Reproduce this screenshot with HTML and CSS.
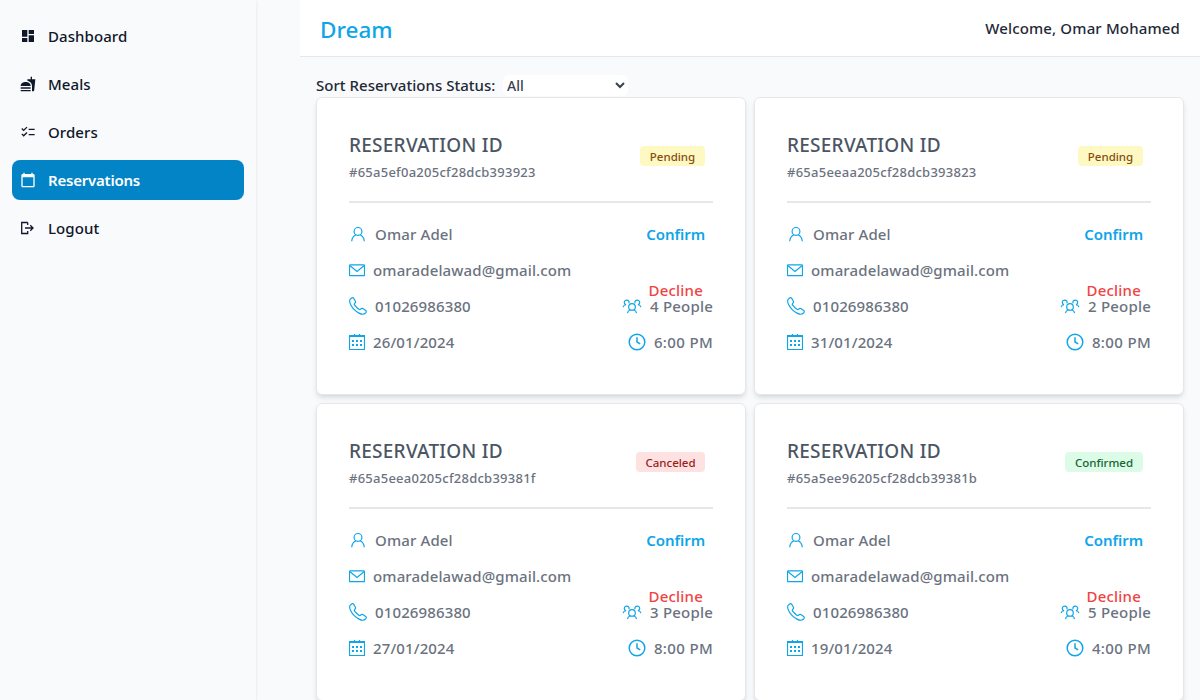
FILE: index.html
```
<!DOCTYPE html>
<html lang="en">
<head>
<meta charset="utf-8">
<title>Dream</title>
<link rel="stylesheet" href="styles.css">
</head>
<body>
<svg class="sprite" aria-hidden="true">
  <symbol id="user" viewBox="0 0 18 18"><circle cx="9" cy="6.400" r="3.900"/><path d="M2.700 16.200C3 13 4.500 10.900 7 9.800M15.300 16.200C15 13 13.500 10.900 11 9.800"/></symbol>
  <symbol id="mail" viewBox="0 0 16 16"><rect x=".5" y="2.900" width="15" height="10.800" rx=".6"/><path d="M1 3.700l7 5.700 7-5.700"/></symbol>
  <symbol id="phone" viewBox="0 0 18 18"><path d="M1 2.500C2.300.8 3.700.2 4.600 1.100L6.400 4.200C6.900 5.100 6.500 5.700 5.700 6.400C5 7 5.200 7.500 5.700 8.200C7 10 8.300 11.200 9.900 12.300C10.600 12.800 11.100 12.700 11.600 12.100C12.300 11.300 13 11.100 13.800 11.600L16.700 13.500C17.700 14.200 17.400 15.200 16.300 16.300C14.800 17.700 12.800 17.600 10 16.100C6.900 14.400 3.400 11.200 1.700 7.800C.6 5.600.3 3.900 1 2.500Z"/></symbol>
  <symbol id="calendar" viewBox="0 0 16 16"><path d="M.5 1.500h15v14H.5zM.5 2.500h15M5.500 0v3M10.500 0v3"/><path class="dots" d="M3 6h2v2H3zM7 6h2v2H7zM11 6h2v2h-2zM3 10h2v2H3zM7 10h2v2H7zM11 10h2v2h-2z"/></symbol>
  <symbol id="people" viewBox="0 0 20 20"><circle cx="10" cy="10.900" r="3.300"/><path d="M5.400 17c.4-1.800 1.400-2.800 2.800-3.300M14.600 17c-.4-1.800-1.400-2.800-2.800-3.300M7 7.300C7.500 5.500 6.300 4 4.600 4.100C2.700 4.200 1.700 6 2.600 7.500C2.900 8.200 3.400 8.600 4 8.900M3.700 8.500C2.400 8.900 1.500 9.800 1.100 11.200M13 7.300C12.500 5.500 13.700 4 15.400 4.100C17.300 4.200 18.300 6 17.400 7.500C17.100 8.200 16.600 8.600 16 8.900M16.300 8.500c1.300.4 2.200 1.300 2.600 2.700"/></symbol>
  <symbol id="clock" viewBox="0 0 18 18"><circle cx="9" cy="9" r="7.800"/><path d="M9 4.200V9l3.200 1.800"/></symbol>
</svg>
<div class="app">
  <nav class="sidebar">
    <a class="nav-item"><svg class="nav-icon" viewBox="0 0 16 16"><path d="M2 2h5.300v6.700H2zM8.700 2H14v4H8.700zM8.700 7.300H14V14H8.700zM2 10h5.300v4H2z"/></svg><span>Dashboard</span></a>
    <a class="nav-item"><svg class="nav-icon" viewBox="0 0 24 24"><path d="M1 22c0 .5.5 1 1 1h13c.6 0 1-.5 1-1v-1H1zM8.500 9C4.800 9 1 11 1 15h15c0-4-3.800-6-7.500-6zM1 17h15v2H1zM18 5V1h-2v4h-5l.2 2.300C14.900 8.300 18 11 18 15v8h1.700c.8 0 1.500-.6 1.600-1.500L23 5z"/></svg><span>Meals</span></a>
    <a class="nav-item"><svg class="nav-icon" viewBox="0 0 24 24"><path d="M22 7h-9v2h9zM22 15h-9v2h9zM5.500 11 2 7.500l1.400-1.400 2.100 2.100 4.300-4.200 1.400 1.400zM5.500 19 2 15.500l1.400-1.400 2.100 2.100 4.300-4.200 1.400 1.400z"/></svg><span>Orders</span></a>
    <a class="nav-item active"><svg class="nav-icon" viewBox="0 0 24 24"><path d="M20 3h-1V1h-2v2H7V1H5v2H4c-1.100 0-2 .9-2 2v16c0 1.100.9 2 2 2h16c1.100 0 2-.9 2-2V5c0-1.100-.9-2-2-2zm0 18H4V8h16z"/></svg><span>Reservations</span></a>
    <a class="nav-item"><svg class="nav-icon outline" viewBox="0 0 16 16"><path d="M7.700 2.500H1.700v11h6V11M7.700 5V2.500M5 8h8M10.300 5.200 13 8l-2.700 2.800"/></svg><span>Logout</span></a>
  </nav>
  <div class="page">
    <header class="topbar"><h1 class="brand">Dream</h1><span class="welcome">Welcome, Omar Mohamed</span></header>
    <main class="content">
      <div class="sort"><label for="status">Sort Reservations Status:</label><select id="status" class="status"><option>All</option><option>Pending</option><option>Confirmed</option><option>Canceled</option></select></div>
      <div class="cards">
        <article class="card">
          <div class="card-head"><div><h2 class="title">RESERVATION ID</h2><p class="rid">#65a5ef0a205cf28dcb393923</p></div><span class="badge pending">Pending</span></div>
          <div class="card-body">
            <div class="contact"><p class="row"><svg class="i18"><use href="#user"/></svg><span>Omar Adel</span></p><p class="row"><svg class="i16"><use href="#mail"/></svg><span class="email">omaradelawad@gmail.com</span></p><p class="row"><svg class="i18"><use href="#phone"/></svg><span class="tel">01026986380</span></p><p class="row"><svg class="i16"><use href="#calendar"/></svg><span class="date">26/01/2024</span></p></div>
            <div class="details"><button class="confirm">Confirm</button><button class="decline">Decline</button><p class="row guests"><svg class="i20"><use href="#people"/></svg><span>4 People</span></p><p class="row time"><svg class="i18 bold"><use href="#clock"/></svg><span>6:00 PM</span></p></div>
          </div>
        </article>
        <article class="card">
          <div class="card-head"><div><h2 class="title">RESERVATION ID</h2><p class="rid">#65a5eeaa205cf28dcb393823</p></div><span class="badge pending">Pending</span></div>
          <div class="card-body">
            <div class="contact"><p class="row"><svg class="i18"><use href="#user"/></svg><span>Omar Adel</span></p><p class="row"><svg class="i16"><use href="#mail"/></svg><span class="email">omaradelawad@gmail.com</span></p><p class="row"><svg class="i18"><use href="#phone"/></svg><span class="tel">01026986380</span></p><p class="row"><svg class="i16"><use href="#calendar"/></svg><span class="date">31/01/2024</span></p></div>
            <div class="details"><button class="confirm">Confirm</button><button class="decline">Decline</button><p class="row guests"><svg class="i20"><use href="#people"/></svg><span>2 People</span></p><p class="row time"><svg class="i18 bold"><use href="#clock"/></svg><span>8:00 PM</span></p></div>
          </div>
        </article>
        <article class="card">
          <div class="card-head"><div><h2 class="title">RESERVATION ID</h2><p class="rid">#65a5eea0205cf28dcb39381f</p></div><span class="badge canceled">Canceled</span></div>
          <div class="card-body">
            <div class="contact"><p class="row"><svg class="i18"><use href="#user"/></svg><span>Omar Adel</span></p><p class="row"><svg class="i16"><use href="#mail"/></svg><span class="email">omaradelawad@gmail.com</span></p><p class="row"><svg class="i18"><use href="#phone"/></svg><span class="tel">01026986380</span></p><p class="row"><svg class="i16"><use href="#calendar"/></svg><span class="date">27/01/2024</span></p></div>
            <div class="details"><button class="confirm">Confirm</button><button class="decline">Decline</button><p class="row guests"><svg class="i20"><use href="#people"/></svg><span>3 People</span></p><p class="row time"><svg class="i18 bold"><use href="#clock"/></svg><span>8:00 PM</span></p></div>
          </div>
        </article>
        <article class="card">
          <div class="card-head"><div><h2 class="title">RESERVATION ID</h2><p class="rid">#65a5ee96205cf28dcb39381b</p></div><span class="badge confirmed">Confirmed</span></div>
          <div class="card-body">
            <div class="contact"><p class="row"><svg class="i18"><use href="#user"/></svg><span>Omar Adel</span></p><p class="row"><svg class="i16"><use href="#mail"/></svg><span class="email">omaradelawad@gmail.com</span></p><p class="row"><svg class="i18"><use href="#phone"/></svg><span class="tel">01026986380</span></p><p class="row"><svg class="i16"><use href="#calendar"/></svg><span class="date">19/01/2024</span></p></div>
            <div class="details"><button class="confirm">Confirm</button><button class="decline">Decline</button><p class="row guests"><svg class="i20"><use href="#people"/></svg><span>5 People</span></p><p class="row time"><svg class="i18 bold"><use href="#clock"/></svg><span>4:00 PM</span></p></div>
          </div>
        </article>
      </div>
    </main>
  </div>
</div>
</body>
</html>
```
FILE: styles.css
```
*{box-sizing:border-box;margin:0;padding:0}
body{font-family:"Segoe UI","Noto Sans",sans-serif;font-size:15px;line-height:24px;font-weight:500;color:#1f2937;background:#f9fafc;height:700px;overflow:hidden;letter-spacing:.15px}
.sprite{position:absolute;width:0;height:0}
.app{display:flex;height:700px}
.sidebar{width:256px;flex:none;margin-right:44px;padding:16px 12px;display:flex;flex-direction:column;gap:8px;box-shadow:0 1px 3px rgba(0,0,0,.1)}
.nav-item{display:flex;align-items:center;gap:12px;height:40px;padding:0 8px;border-radius:8px;color:#0f172a;letter-spacing:.08px}
.nav-icon{width:16px;height:16px;fill:currentColor}
.nav-icon.outline{fill:none;stroke:currentColor;stroke-width:1.3}
.active{background:#0284c7;color:#fff;font-weight:600;letter-spacing:-.22px}
.page{flex:1;min-width:0}
.topbar{height:57px;background:#fff;border-bottom:1px solid #e5e7eb;display:flex;justify-content:space-between;align-items:center;padding:0 20px}
.brand{font-size:22.5px;font-weight:500;line-height:32px;color:#0ea5e9;padding-top:3px;letter-spacing:0}
.content{padding:16px}
.sort{display:flex;align-items:center;gap:8px;height:24px}
.sort label{letter-spacing:.02px;width:179px;white-space:nowrap}
.status{font:inherit;font-size:14px;line-height:20px;height:21px;width:125px;border:0;border-radius:6px;background:#fff;color:#374151}
.cards{display:grid;grid-template-columns:1fr 1fr;gap:8px}
.card{height:298px;background:#fff;border:1px solid #e5e7eb;border-radius:6px;padding:32px;box-shadow:0 4px 6px -1px rgba(0,0,0,.1),0 2px 4px -2px rgba(0,0,0,.1)}
.card-head{display:flex;justify-content:space-between;align-items:flex-start;height:73px;padding:1px 8px 0 0;border-bottom:2px solid #e5e7eb}
.title{font-size:19px;line-height:28px;font-weight:500;color:#4b5563;letter-spacing:.25px}
.rid{font-size:13px;line-height:20px;color:#6b7280;margin-top:3px;letter-spacing:.25px}
.badge{height:20px;line-height:21px;border-radius:4px;font-size:11.5px;letter-spacing:-.02px;margin-top:15px;text-align:center}
.pending{background:#fef9c3;color:#854d0e;width:65px}
.canceled{background:#fee2e2;color:#991b1b;width:69px}
.confirmed{background:#dcfce7;color:#166534;width:78px}
.card-body{display:flex;justify-content:space-between;padding-top:19px;color:#6b7280;letter-spacing:.13px}
.contact{display:flex;flex-direction:column;gap:12px}
.details{display:flex;flex-direction:column;align-items:flex-end}
.row{display:flex;align-items:center;gap:8px;height:24px}
.row svg{fill:none;stroke:#0ea5e9;stroke-width:1.2;flex:none}
.dots{fill:#0ea5e9;stroke:none}
.i16{width:16px;height:16px}
.i18{width:18px;height:18px}
.i20{width:20px;height:20px}
.row .bold{stroke-width:1.5}
button{background:none;border:0;font:inherit;letter-spacing:inherit;height:24px;padding:0 8px}
.confirm{color:#0ea5e9;font-weight:600;letter-spacing:-.05px}
.decline{color:#ef4444;margin-top:32px;padding-right:10px;letter-spacing:.2px}
.guests{margin-top:-8px;letter-spacing:.2px}
.time{margin-top:12px;letter-spacing:.35px}
```
